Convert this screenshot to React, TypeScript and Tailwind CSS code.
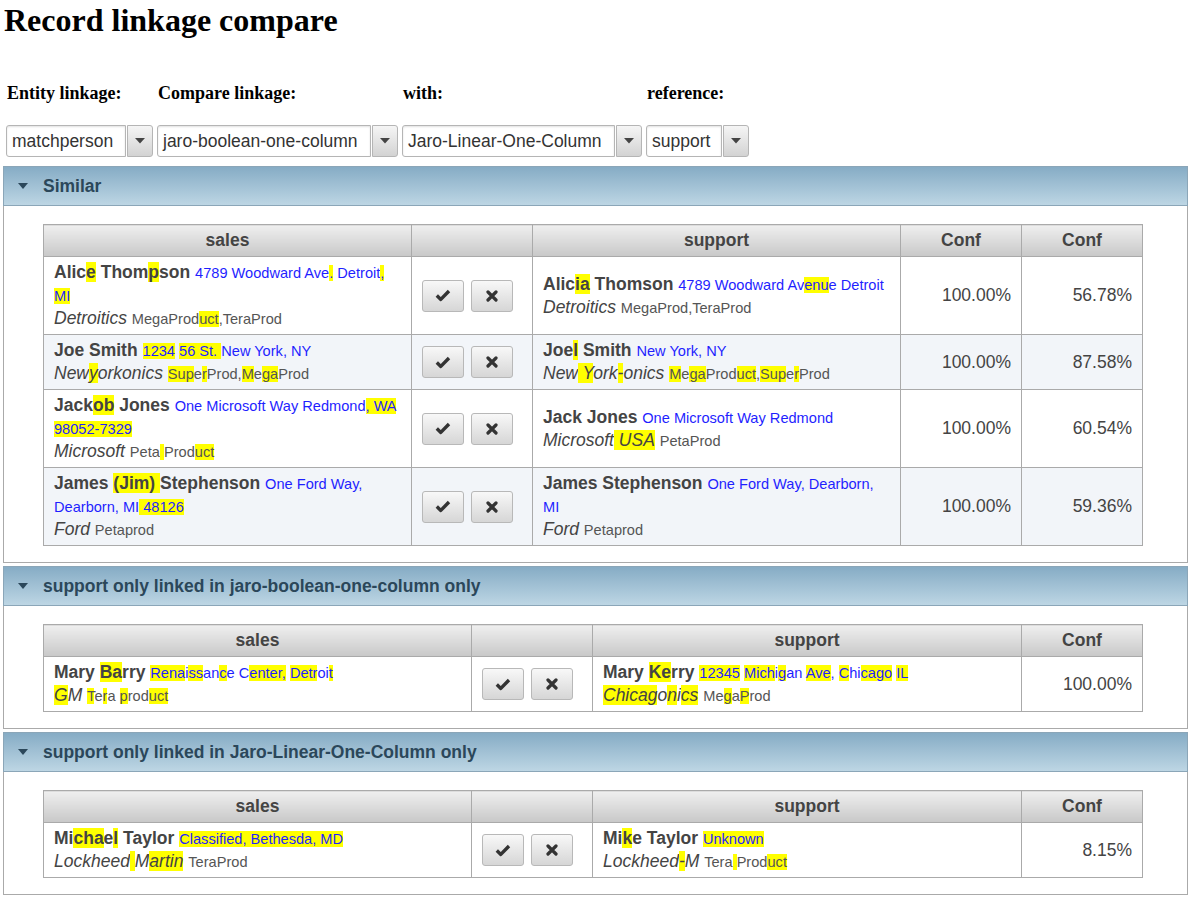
import React from 'react';

type Rec = { name: string; addr: string; company: string; prod: string };

type Row = { left: Rec; right: Rec; confs: string[] };

// text in [brackets] is highlighted
const Hl = ({ t }: { t: string }) => {
  const parts = t.split(/(\[[^\]]*\])/);
  return (
    <>
      {parts.map((p, i) =>
        p.startsWith('[') ? (
          <span key={i} className="bg-[#ffff00]">
            {p.slice(1, -1)}
          </span>
        ) : (
          <React.Fragment key={i}>{p}</React.Fragment>
        )
      )}
    </>
  );
};

const similarRows: Row[] = [
  {
    left: { name: 'Alic[e] Thom[p]son', addr: '4789 Woodward Ave[.] Detroit[,] [MI]', company: 'Detroitics', prod: 'MegaProd[uct],TeraProd' },
    right: { name: 'Alic[ia] Thomson', addr: '4789 Woodward Av[enu]e Detroit', company: 'Detroitics', prod: 'MegaProd,TeraProd' },
    confs: ['100.00%', '56.78%'],
  },
  {
    left: { name: 'Joe Smith', addr: '[1234] [56 St. ]New York, NY', company: 'New[y]orkonics', prod: '[Sup]e[r]Prod,[M]e[ga]Prod' },
    right: { name: 'Joe[l] Smith', addr: 'New York, NY', company: 'New[ Y]ork[-]onics', prod: '[M]e[ga]Prod[uct],[Sup]e[r]Prod' },
    confs: ['100.00%', '87.58%'],
  },
  {
    left: { name: 'Jack[ob] Jones', addr: 'One Microsoft Way Redmond[, WA] [98052-7329]', company: 'Microsoft', prod: 'Peta[ ]Prod[uct]' },
    right: { name: 'Jack Jones', addr: 'One Microsoft Way Redmond', company: 'Microsoft[ USA]', prod: 'PetaProd' },
    confs: ['100.00%', '60.54%'],
  },
  {
    left: { name: 'James [(Jim) ]Stephenson', addr: 'One Ford Way, Dearborn, MI[ 48126]', company: 'Ford', prod: 'Petaprod' },
    right: { name: 'James Stephenson', addr: 'One Ford Way, Dearborn, MI', company: 'Ford', prod: 'Petaprod' },
    confs: ['100.00%', '59.36%'],
  },
];

const booleanRows: Row[] = [
  {
    left: { name: 'Mary [Ba]rry', addr: '[Rena]i[ss]an[c]e C[enter,] [Detr]oi[t]', company: '[G]M', prod: '[T]e[r]a [p]rod[uct]' },
    right: { name: 'Mary [Ke]rry', addr: '[12345] [Mich]i[g]an [Ave], [C]hi[cago] [IL]', company: '[Chicag]o[n]i[cs]', prod: 'Me[g]a[P]rod' },
    confs: ['100.00%'],
  },
];

const linearRows: Row[] = [
  {
    left: { name: 'Mi[cha]e[l] Taylor', addr: '[Classified, Bethesda, MD]', company: 'Lockheed[ ]M[artin]', prod: 'TeraProd' },
    right: { name: 'Mi[k]e Taylor', addr: '[Unknown]', company: 'Lockheed[-]M', prod: 'Tera[ ]Prod[uct]' },
    confs: ['8.15%'],
  },
];

const Record = ({ r }: { r: Rec }) => (
  <>
    <span className="font-bold text-[#444]">
      <Hl t={r.name} />
    </span>{' '}
    <span className="text-[14.6px] leading-[16px] text-[#1f1fff]">
      <Hl t={r.addr} />
    </span>
    <br />
    <span className="italic text-[#444]">
      <Hl t={r.company} />
    </span>{' '}
    <span className="text-[14.6px] leading-[16px] text-[#555]">
      <Hl t={r.prod} />
    </span>
  </>
);

const CheckIcon = () => (
  <svg width="16" height="13" viewBox="0 0 16 13">
    <path d="M1.8 6.6 L5.8 10.4 L14 2" fill="none" stroke="#333" strokeWidth="3.4" strokeLinejoin="round" />
  </svg>
);

const XIcon = () => (
  <svg width="12" height="12" viewBox="0 0 12 12">
    <path d="M2 2 L10 10 M10 2 L2 10" fill="none" stroke="#333" strokeWidth="3.2" strokeLinecap="round" />
  </svg>
);

const Btn = ({ children }: { children: React.ReactNode }) => (
  <button className="w-[42px] h-[32px] rounded-[3px] border border-[#b8b8b8] bg-linear-to-b from-[#f8f8f8] to-[#d6d6d6] flex items-center justify-center">
    {children}
  </button>
);

const th = 'h-[32px] border border-[#aaa] bg-linear-to-b from-[#efefef] to-[#c8c8c8] font-bold text-[17.5px] text-[#444] text-center';
const td = 'border border-[#aaa] px-[10px] py-[4px] text-[17.5px] leading-[23px] align-middle';

const CompareTable = ({ rows, widths }: { rows: Row[]; widths: number[] }) => {
  const total = widths.reduce((a, b) => a + b, 0);
  const confCount = rows[0].confs.length;
  return (
    <table className="table-fixed border-collapse" style={{ width: total }}>
      <colgroup>
        {widths.map((w, i) => (
          <col key={i} style={{ width: w }} />
        ))}
      </colgroup>
      <thead>
        <tr>
          <th className={th}>sales</th>
          <th className={th}></th>
          <th className={th}>support</th>
          {Array.from({ length: confCount }).map((_, i) => (
            <th key={i} className={th}>
              Conf
            </th>
          ))}
        </tr>
      </thead>
      <tbody>
        {rows.map((row, i) => (
          <tr key={i} className={i % 2 === 1 ? 'bg-[#f2f5f9]' : 'bg-white'}>
            <td className={td}>
              <Record r={row.left} />
            </td>
            <td className="border border-[#aaa] pl-[10px] align-middle">
              <div className="flex gap-[7px]">
                <Btn>
                  <CheckIcon />
                </Btn>
                <Btn>
                  <XIcon />
                </Btn>
              </div>
            </td>
            <td className={td}>
              <Record r={row.right} />
            </td>
            {row.confs.map((c, j) => (
              <td key={j} className="border border-[#aaa] pr-[10px] text-right text-[17.5px] text-[#444] align-middle">
                {c}
              </td>
            ))}
          </tr>
        ))}
      </tbody>
    </table>
  );
};

const Section = ({ title, children }: { title: string; children: React.ReactNode }) => (
  <div className="mx-[3px]">
    <div className="h-[40px] flex items-center border border-[#8ba6b8] bg-linear-to-b from-[#86acc5] to-[#bdd6e4]">
      <svg width="10" height="6" viewBox="0 0 10 6" className="ml-[14px] mr-[15px]">
        <polygon points="0,0 10,0 5,6" fill="#2b475a" />
      </svg>
      <span className="font-bold text-[17.5px] text-[#2b475a]">{title}</span>
    </div>
    <div className="border border-t-0 border-[#aaa] bg-white pl-[39px] pt-[18px] pb-[16px]">{children}</div>
  </div>
);

const SelectBox = ({ value, width }: { value: string; width: number }) => (
  <div className="flex h-[32px]" style={{ width }}>
    <div className="flex-1 flex items-center pl-[5px] bg-white border border-[#b5b5b5] rounded-l-[3px] shadow-[inset_0_1px_2px_rgba(0,0,0,0.12)] text-[17.5px] text-[#333] overflow-hidden whitespace-nowrap">
      {value}
    </div>
    <div className="w-[26px] ml-[1px] flex items-center justify-center border border-[#b5b5b5] rounded-r-[3px] bg-linear-to-b from-[#f5f5f5] to-[#d3d3d3]">
      <svg width="10" height="6" viewBox="0 0 10 6">
        <polygon points="0,0 10,0 5,5.5" fill="#444" />
      </svg>
    </div>
  </div>
);

const labelCls = "font-bold text-[18px] text-black pl-[1px] font-['Liberation_Serif',serif]";

export default function App() {
  return (
    <div className="font-['Liberation_Sans',Arial,sans-serif] bg-white min-h-[900px]">
      <h1 className="font-['Liberation_Serif',serif] font-bold text-[32px] leading-[37px] pt-[2px] pl-[4px] text-black">
        Record linkage compare
      </h1>
      <div className="grid grid-cols-[147px_241px_240px_103px] gap-x-[4px] ml-[6px] mt-[41px]">
        <div className={labelCls}>Entity linkage:</div>
        <div className={labelCls}>Compare linkage:</div>
        <div className={labelCls}>with:</div>
        <div className={labelCls}>reference:</div>
      </div>
      <div className="flex gap-[4px] ml-[6px] mt-[18px] mb-[9px]">
        <SelectBox value="matchperson" width={147} />
        <SelectBox value="jaro-boolean-one-column" width={241} />
        <SelectBox value="Jaro-Linear-One-Column" width={240} />
        <SelectBox value="support" width={103} />
      </div>
      <div className="flex flex-col gap-[3px]">
        <Section title="Similar">
          <CompareTable rows={similarRows} widths={[368, 121, 368, 121, 121]} />
        </Section>
        <Section title="support only linked in jaro-boolean-one-column only">
          <CompareTable rows={booleanRows} widths={[428, 121, 429, 121]} />
        </Section>
        <Section title="support only linked in Jaro-Linear-One-Column only">
          <CompareTable rows={linearRows} widths={[428, 121, 429, 121]} />
        </Section>
      </div>
    </div>
  );
}
